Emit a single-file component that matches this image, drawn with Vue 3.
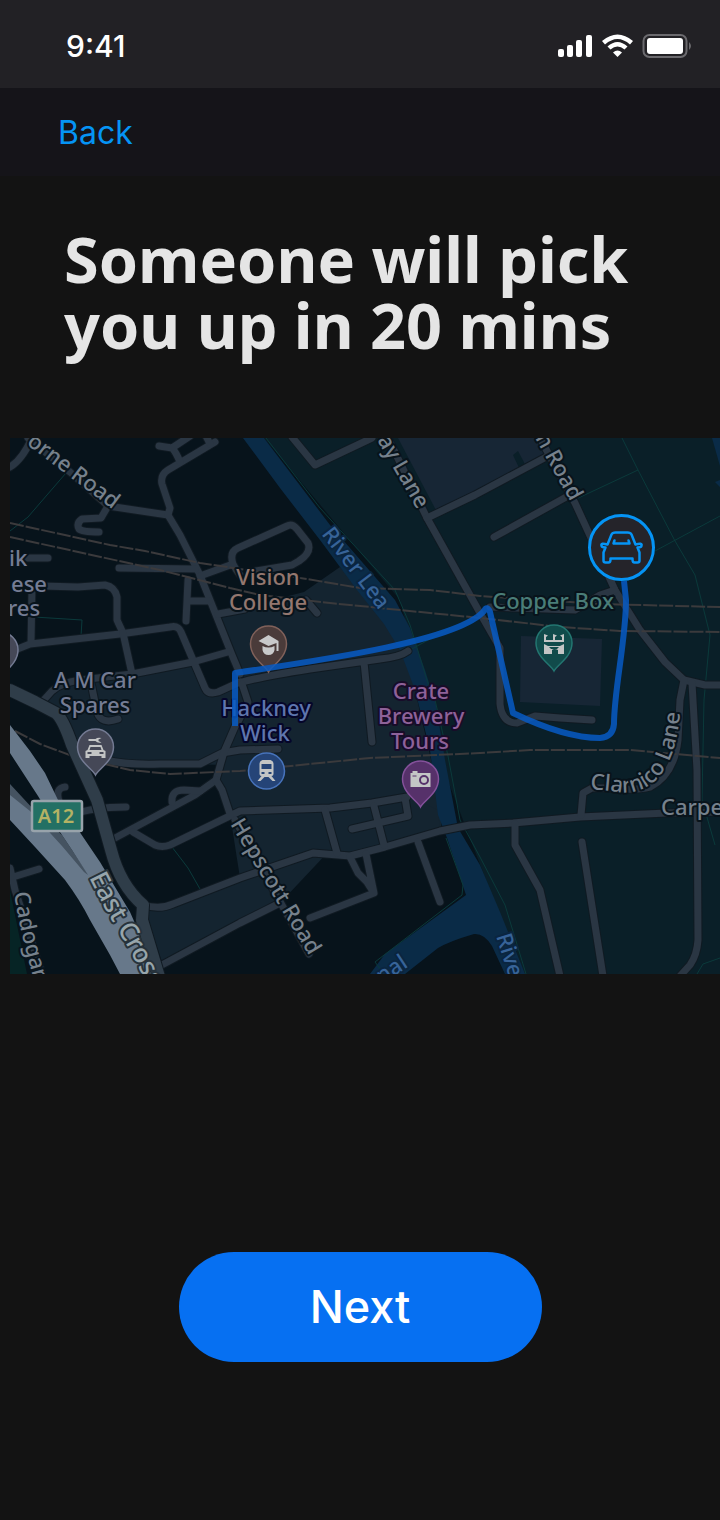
<script setup>
const roads = [
  'M10 467Q22 460 32 438',
  'M28 438L70 472L108 506L168 515',
  'M108 506L101 518L82 519Q76 523 79 529Q82 532 99 532',
  'M215 442L168 470Q160 475 162 484L170 508L168 515L180 535L200 575L232 655L240 674',
  'M159 446L172 448L190 436M172 448Q176 452 180 462M205 434L210 444',
  'M119 568L195 569',
  'M200 576L233 564Q236 570 240 575M233 564Q229 552 238 548L287 526Q292 523 297 529L308 543Q312 552 299 561L292 565L250 572',
  'M188 580L186 621M188 601L209 601',
  'M218 614L245 609M306 600L317 613',
  'M27 558L48 558',
  'M42 586L78 587L105 585Q115 587 117 597L117 620L123 633',
  'M32 588L31 643M10 652L30 644L120 634L170 627Q178 625 181 632L205 688Q208 695 218 692L240 682',
  'M123 633L132 674M42 702L52 691Q60 683 80 680L132 674L193 662L228 652',
  'M91 683L97 712Q101 725 118 719',
  'M106 760Q125 765 160 764L200 764L222 753L240 750L278 749',
  'M237 722L224 752L216 780L195 795L115 838',
  'M172 802Q171 790 184 790L200 791',
  'M216 780L222 790L230 814M133 832L155 845Q162 848 170 845L240 811L330 808L372 803L407 797',
  'M59 801Q55 788 65 787M72 815Q92 807 126 807',
  'M10 868L15 890L42 974M13 877L39 869',
  'M143 905Q160 910 173 904L240 878L313 853L350 856L385 847L440 831L470 825L513 823L580 817L667 813L720 812',
  'M160 966L240 923L280 903',
  'M235 820L309 954',
  'M325 810L337 853M374 806L384 845M352 829L408 816L405 798',
  'M350 857L358 873L367 882L374 893L366 854M310 918L374 893',
  'M418 842L440 902',
  'M242 682Q260 677 310 669L380 659Q400 657 408 651M364 662L372 742',
  'M242 684L248 702L237 724',
  'M292 437L315 465L372 438',
  'M388 438L427 518L480 613L500 648L500 704Q502 723 517 723L535 716L560 718L592 720',
  'M427 518L475 495L550 455',
  'M540 438L575 503L615 590L640 630L665 662L684 680L705 685L720 685',
  'M494 537L568 496',
  'M615 590L600 595L575 610L490 607',
  'M684 680L680 700L678 740Q674 775 650 787Q635 791 608 788L592 788L583 793L581 815',
  'M692 683L697 770L698 940Q697 955 690 965L680 976',
  'M515 824L515 845L540 890L560 976',
  'M582 842L603 976',
]

const rails = [
  'M10 523L110 545L145 551L200 563L307 579L360 588L430 590L480 596L600 604L720 607',
  'M10 537L160 570L230 588L260 595L330 603L480 618L560 627L620 631L720 632',
  'M15 731L40 744L75 757L130 770L170 774L240 771L370 758L480 753L530 750L630 750L720 758',
]

const bounds = [
  'M66 473L28 517L10 531M34 617L82 620L81 636M172 847L188 868L200 889',
  'M266 438L320 508L395 590L410 625L430 690',
  'M435 700L448 756L460 820L480 857L505 905L526 974',
  'M446 838L463 885L462 895L375 962L384 974',
  'M622 438L638 470L675 541L695 575L710 635L704 700L702 800L715 845M638 470L574 500M655 551L720 516M410 650L450 628',
  'M697 974L703 964L720 958',
]

const avenue = 'M10 690L35 702L56 713Q63 719 72 745L97 800L111 850Q120 885 143 905L142 920L160 980'

const pin = 'M0 25C-3 19-18 11-18-3A18 18 0 0 1 18-3C18 11 3 19 0 25Z'

const labels = [
  { kind: 'school', x: 268, y: 585, text: 'Vision' },
  { kind: 'school', x: 268, y: 610, text: 'College' },
  { kind: 'shop', x: 95, y: 688, text: 'A M Car' },
  { kind: 'shop', x: 95, y: 713, text: 'Spares' },
  { kind: 'station', x: 266, y: 716, text: 'Hackney' },
  { kind: 'station', x: 265, y: 741, text: 'Wick' },
  { kind: 'brewery', x: 421, y: 699, text: 'Crate' },
  { kind: 'brewery', x: 421, y: 724, text: 'Brewery' },
  { kind: 'brewery', x: 420, y: 749, text: 'Tours' },
  { kind: 'venue', x: 553, y: 609, text: 'Copper Box' },
]
</script>

<template>
  <div class="screen">
    <div class="status">
      <time class="clock">9:41</time>
      <svg class="indicators" viewBox="0 0 134 24" aria-label="Signal, Wi-Fi and battery">
        <g fill="#fff">
          <rect x="0" y="15" width="6" height="8" rx="2" />
          <rect x="9" y="11" width="6" height="12" rx="2" />
          <rect x="18" y="6" width="6" height="17" rx="2" />
          <rect x="28" y="1" width="6" height="22" rx="2" />
          <path d="M44 7Q59.500-6 75 7L72 10.500Q59.500-.5 47 10.500Z" />
          <path d="M49.500 12.500Q59.500 3.500 69.500 12.500L66.500 15.500Q59.500 9.500 52.500 15.500Z" />
          <path d="M55 18.500Q59.500 14.500 64 18.500L59.500 23Z" />
          <rect x="89" y="4" width="36" height="16" rx="3" />
        </g>
        <rect x="85.500" y="1" width="43" height="22" rx="6" fill="none" stroke="#6b6a6e" stroke-width="2" />
        <path d="M131 8Q135 12 131 16Z" fill="#6b6a6e" />
      </svg>
    </div>
    <nav class="bar"><a href="#" class="back">Back</a></nav>
    <main class="content">
      <h1 class="title">Someone will pick you up in 20 mins</h1>

      <svg class="map" viewBox="10 438 710 536" role="img" aria-label="Pick-up route map">
        <defs>
          <path id="orne" d="M26 444L116 512" />
          <path id="river-n" d="M321 534L388 622" />
          <path id="way" d="M377 440L421 516" />
          <path id="road-n" d="M535 438L575 510" />
          <path id="clarnico" d="M590 789L612 791C640 798 681 785 681 690" />
          <path id="hepscott" d="M230 824L314 964" />
          <path id="cadogan" d="M14 893Q20 935 37 990" />
          <path id="east" d="M89 877Q108 916 124 940Q136 962 160 1010" />
          <path id="river-s" d="M496 936L516 1000" />
          <path id="canal" d="M382 984L420 959" />
        </defs>

        <rect x="10" y="438" width="710" height="536" fill="#07131b" />
        <path d="M264 438H720V974H522L440 760L400 600Z" fill="#0a1f28" />
        <path d="M218 614L304 592L340 567L400 630L415 690L438 790L442 831L350 856L313 853L240 878L330 810L230 814L216 780L224 765L118 762L86 756L60 710L42 702L58 687L192 666L208 692L238 682Z" fill="#142430" />
        <path d="M143 905L173 904L240 878L313 853L330 850L282 901L163 965Z" fill="#142430" />
        <path d="M230 814L330 808L410 797L438 810L440 831L350 856L313 853L240 878Z" fill="#142430" />
        <path d="M10 890L27 974H10Z" fill="#062425" />
        <path d="M398 438H540L550 455L475 495L437 512Z" fill="#172635" />
        <path d="M513 455L520 470L526 466L518 451Z" fill="#0a1f28" />
        <path d="M521 636L602 639L600 706L520 702Z" fill="#172635" />
        <path d="M243 438H264L330 525L395 600L410 628L425 670L436 705L445 760L458 828L480 865L500 912L525 974H505L492 946Q484 933 474 934Q450 941 438 948L405 974H370L385 954L466 895L447 838L438 815L430 750L415 690L400 650L384 624L357 590L320 540L280 488Z" fill="#0a2b47" />
        <path d="M712 438H720V466ZM715 482L720 480V487Z" fill="#0a2b47" />

        <g class="bounds"><path v-for="d in bounds" :key="d" :d="d" /></g>
        <g class="casing"><path v-for="d in roads" :key="d" :d="d" /></g>
        <g class="roads"><path v-for="d in roads" :key="d" :d="d" /></g>
        <g class="rails"><path v-for="d in rails" :key="d" :d="d" /></g>

        <path d="M10 784L35 811L62 835L92 880L78 874L35 823L10 798Z" fill="#455361" />
        <path d="M10 725L30 751L45 773L58 800L100 862L130 912L145 946L159 974H120L110 955L90 920Q80 900 65 880L35 847L10 820V795L30 811L62 846L84 872L88 875L72 850L60 832L38 796L10 753Z" fill="#67788a" />
        <path :d="avenue" class="avenue edge" />
        <path :d="avenue" class="avenue" />

        <g class="road-label">
          <text><textPath href="#orne">orne Road</textPath></text>
          <text><textPath href="#way">ay Lane</textPath></text>
          <text><textPath href="#road-n">n Road</textPath></text>
          <text><textPath href="#clarnico">Clarnico Lane</textPath></text>
          <text><textPath href="#hepscott">Hepscott Road</textPath></text>
          <text><textPath href="#cadogan">Cadogan</textPath></text>
          <text x="661" y="815">Carpenters</text>
        </g>
        <text class="major"><textPath href="#east">East Cross</textPath></text>
        <g class="water">
          <text><textPath href="#river-n">River Lea</textPath></text>
          <text><textPath href="#river-s">River</textPath></text>
          <text><textPath href="#canal">nal</textPath></text>
        </g>
        <g class="shop">
          <text x="9" y="566">ik</text>
          <text x="11" y="592">ese</text>
          <text x="8" y="616">res</text>
        </g>
        <g class="places">
          <text v-for="l in labels" :key="l.text" :x="l.x" :y="l.y" :class="l.kind">{{ l.text }}</text>
        </g>

        <rect x="32" y="801" width="50" height="30" rx="2" fill="#237064" stroke="#98a3ab" stroke-width="2.500" />
        <text class="shield" x="56" y="823">A12</text>

        <g transform="translate(0 653)">
          <path :d="pin" fill="#454857" stroke="#747b93" stroke-width="1.500" />
        </g>
        <g transform="translate(268.500 647)">
          <path :d="pin" fill="#4a3b3a" stroke="#80615a" stroke-width="1.500" />
          <path d="M-10-6L0-12L10-6V4H8V-4L0-1Z M-6-1Q0 2 6-1V3Q5 8 0 8T-6 3Z" fill="#c8c9ca" />
        </g>
        <g transform="translate(95.500 750)">
          <path :d="pin" fill="#454857" stroke="#747b93" stroke-width="1.500" />
          <path d="M-7-11H0Q2-13 6-12L3-10.500V-9L6-7.500Q2-6.500 0-9H-7Z" fill="#c3c5c5" />
          <path fill-rule="evenodd" d="M-6-5H6L8 0L10 1V8H6V6H-6V8H-10V1L-8 0ZM-5-3L-6 0H6L5-3ZM-8 2V4H-4V2ZM4 2V4H8V2Z" fill="#c3c5c5" />
        </g>
        <g transform="translate(554 646)">
          <path :d="pin" fill="#114b4b" stroke="#237671" stroke-width="1.500" />
          <path d="M-10-12L-6-10.500L-8-9V-6H-1V-12L3-10.500L1-9V-6H8V-9L6-10.500L10-12V-4H-10ZM-10-2L-6 0H6L10-2V8H4V4Q0 2-2 4V8H-10ZM-5 1L-3 3H3L5 1Z" fill-rule="evenodd" fill="#c3c5c5" />
        </g>
        <g transform="translate(420.500 782)">
          <path :d="pin" fill="#56316a" stroke="#84519a" stroke-width="1.500" />
          <path d="M-10-9H-8V-11H-3V-9H10V5H-10Z" fill="#c3c5c5" />
          <circle cx="3.500" cy="-2" r="4" fill="none" stroke="#56316a" stroke-width="2" />
          <path d="M-8-6H-4" stroke="#56316a" />
        </g>
        <g transform="translate(266.500 771)">
          <circle r="18" fill="#254477" stroke="#4773bb" stroke-width="1.500" />
          <path fill-rule="evenodd" d="M-4-11H4Q7-10 7-7V3Q7 5 5 5L9 10H6L2 6H-2L-6 10H-9L-5 5Q-7 5-7 3V-7Q-7-10-4-11ZM-5-7V-2H5V-7ZM-5 1V3H-2V1ZM2 1V3H5V1Z" fill="#c3c5c5" />
        </g>

        <path class="route" d="M235 726V673C330 659 459 640 484 611Q487 605 490 612L513 713Q565 738 600 738Q613 737 614 724C614 690 626 640 626 600L624 581" />

        <g transform="translate(621.500 547.500)">
          <circle r="32" fill="#25242a" stroke="#0594f5" stroke-width="3" />
          <path class="car" d="M-14-3L-10-13Q-9-15-6-15H6Q9-15 10-13L14-3M-14-3Q-21-5-20-2Q-20 0-16 0L-18 5V13Q-18 15-16 15H-13Q-11 15-11 12V11H11V12Q11 15 13 15H16Q18 15 18 13V5L16 0Q20 0 20-2Q21-5 14-3" />
          <path class="car" d="M-7-7L-8-4H8L7-7" />
        </g>
      </svg>

      <button type="button" class="next">Next</button>
    </main>
  </div>
</template>

<style>
body {
  background: #131313;
}
</style>

<style scoped>
.screen {
  min-height: 100vh;
  display: flex;
  flex-direction: column;
  background: #131313;
  font-family: Inter, "Liberation Sans", sans-serif;
}
.status {
  height: 88px;
  box-sizing: border-box;
  padding: 4px 28px 0 66px;
  display: flex;
  align-items: center;
  justify-content: space-between;
  background: #222125;
}
.clock {
  color: #fff;
  font-size: 30px;
  font-weight: 500;
  line-height: 40px;
}
.indicators {
  width: 134px;
  height: 24px;
}
.bar {
  height: 88px;
  box-sizing: border-box;
  padding: 2px 58px 0;
  display: flex;
  align-items: center;
  background: #151419;
}
.back {
  color: #0594f5;
  font-size: 32px;
  line-height: 40px;
  text-decoration: none;
}
.content {
  display: flex;
  flex-direction: column;
}
.title {
  margin: 50px 64px 80px;
  color: #e5e5e5;
  font: 700 63px/66px "Noto Sans", sans-serif;
}
.map {
  display: block;
  margin-left: 10px;
  font-family: "Noto Sans", sans-serif;
}
.bounds path {
  fill: none;
  stroke: #0b3a3b;
}
.casing path,
.roads path,
.avenue {
  fill: none;
  stroke: #101a22;
  stroke-width: 9;
  stroke-linecap: round;
  stroke-linejoin: round;
}
.roads path {
  stroke: #2a3643;
  stroke-width: 7;
}
.avenue {
  stroke: #2f3d49;
  stroke-width: 12;
}
.avenue.edge {
  stroke: #101a22;
  stroke-width: 14;
}
.rails path {
  fill: none;
  stroke: #3b3a3c;
  stroke-width: 2;
  stroke-dasharray: 14 2;
}
.route {
  fill: none;
  stroke: #075bc4;
  stroke-opacity: 0.85;
  stroke-width: 6;
  stroke-linejoin: round;
}
text {
  font-size: 22px;
  font-weight: 500;
  paint-order: stroke;
  stroke: #08131b;
  stroke-width: 4px;
  stroke-linejoin: round;
}
.road-label text {
  fill: #76818c;
}
.major {
  fill: #97a5ab;
  stroke: #26323b;
  font-size: 26px;
}
.water text {
  fill: #376398;
  stroke: #0a2540;
}
.places text {
  text-anchor: middle;
}
.shop,
.places .shop {
  fill: #747c94;
}
.places .school {
  fill: #93776f;
}
.places .station {
  fill: #5f76ae;
  stroke: #05052a;
}
.places .brewery {
  fill: #8e6299;
  stroke: #180c29;
}
.places .venue {
  fill: #4a7d78;
}
.shield {
  fill: #b4b264;
  stroke: none;
  text-anchor: middle;
  font-size: 20px;
  font-weight: 600;
}
.car {
  fill: none;
  stroke: #0594f5;
  stroke-width: 2.5;
  stroke-linejoin: round;
  stroke-linecap: round;
}
.next {
  align-self: center;
  width: 363px;
  max-width: 90%;
  margin: 278px 0 80px;
  padding: 27px 0;
  border: 0;
  border-radius: 55px;
  background: #0670f2;
  color: #fff;
  font: 500 45px/56px Inter, sans-serif;
  cursor: pointer;
}
</style>
